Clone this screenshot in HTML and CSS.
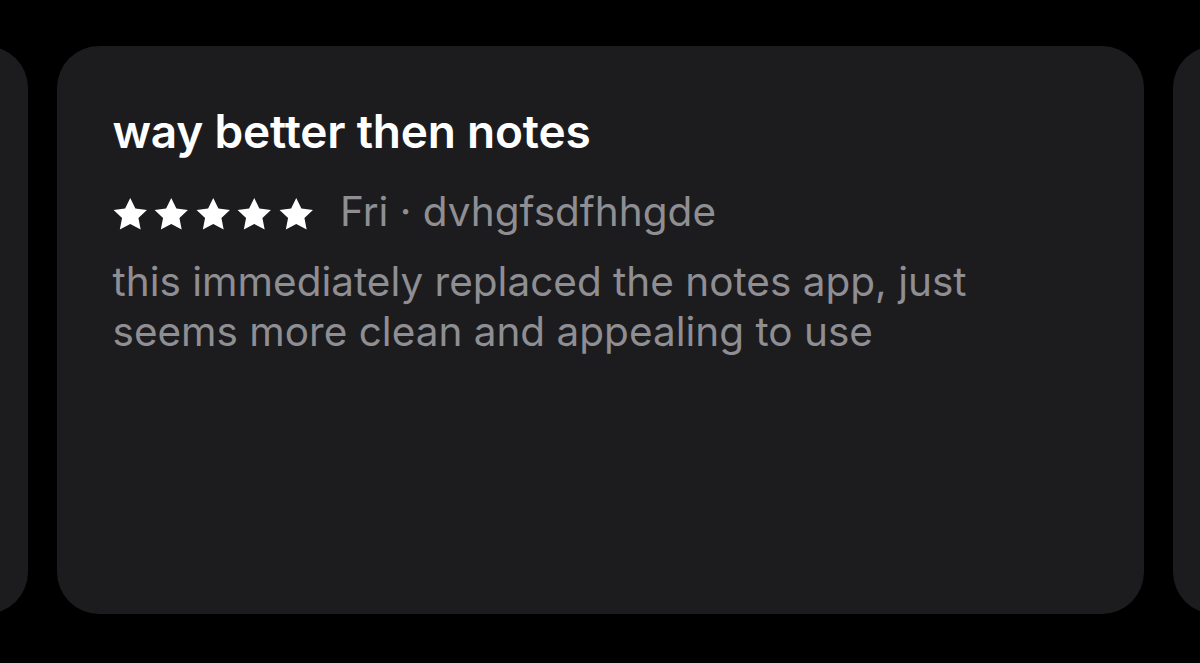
FILE: index.html
```html
<!DOCTYPE html>
<html lang="en">
<head>
    <meta charset="UTF-8">
    <title>Reviews</title>
    <link rel="stylesheet" href="styles.css">
</head>
<body>
<div class="reviews">
    <div class="card"></div>
    <div class="card">
        <h2 class="title">way better then notes</h2>
        <div class="meta">
            <span class="stars">
                <svg viewBox="0 0 24 24"><path d="M12 1.8l3.2 6.6 7.2.9-5.3 5 1.4 7.2L12 18l-6.5 3.5 1.4-7.2-5.3-5 7.2-.9z"/></svg>
                <svg viewBox="0 0 24 24"><path d="M12 1.8l3.2 6.6 7.2.9-5.3 5 1.4 7.2L12 18l-6.5 3.5 1.4-7.2-5.3-5 7.2-.9z"/></svg>
                <svg viewBox="0 0 24 24"><path d="M12 1.8l3.2 6.6 7.2.9-5.3 5 1.4 7.2L12 18l-6.5 3.5 1.4-7.2-5.3-5 7.2-.9z"/></svg>
                <svg viewBox="0 0 24 24"><path d="M12 1.8l3.2 6.6 7.2.9-5.3 5 1.4 7.2L12 18l-6.5 3.5 1.4-7.2-5.3-5 7.2-.9z"/></svg>
                <svg viewBox="0 0 24 24"><path d="M12 1.8l3.2 6.6 7.2.9-5.3 5 1.4 7.2L12 18l-6.5 3.5 1.4-7.2-5.3-5 7.2-.9z"/></svg>
            </span>
            <span class="info">Fri · dvhgfsdfhhgde</span>
        </div>
        <p class="body">this immediately replaced the notes app, just<br>seems more clean and appealing to use</p>
    </div>
    <div class="card"></div>
</div>
</body>
</html>
```

FILE: styles.css
```css
*{
    margin: 0;
    padding: 0;
    box-sizing: border-box;
}
body{
    width: 1200px;
    height: 663px;
    background: #000;
    overflow: hidden;
    font-family: Inter, "Noto Sans", sans-serif;
}
.reviews{
    display: flex;
    justify-content: center;
    gap: 29px;
    padding-top: 46px;
    overflow: hidden;
}
.card{
    flex-shrink: 0;
    width: 1087px;
    height: 568px;
    border-radius: 42px;
    background: #1c1c1e;
    padding: 57px 56px 0;
}
.title{
    color: #fff;
    font-size: 46px;
    font-weight: 600;
    line-height: 56px;
    letter-spacing: -0.2px;
}
.meta{
    display: flex;
    align-items: center;
    margin-top: 31px;
}
.stars{
    display: flex;
    gap: 3px;
    margin: 4px 0 0 -2px;
}
.stars svg{
    width: 38.5px;
    height: 38.5px;
    fill: #fff;
}
.info{
    margin-left: 25px;
    color: #8e8e93;
    font-size: 40.5px;
    line-height: 44px;
}
.body{
    margin-top: 23px;
    color: #8e8e93;
    font-size: 40.5px;
    line-height: 50px;
}
```
